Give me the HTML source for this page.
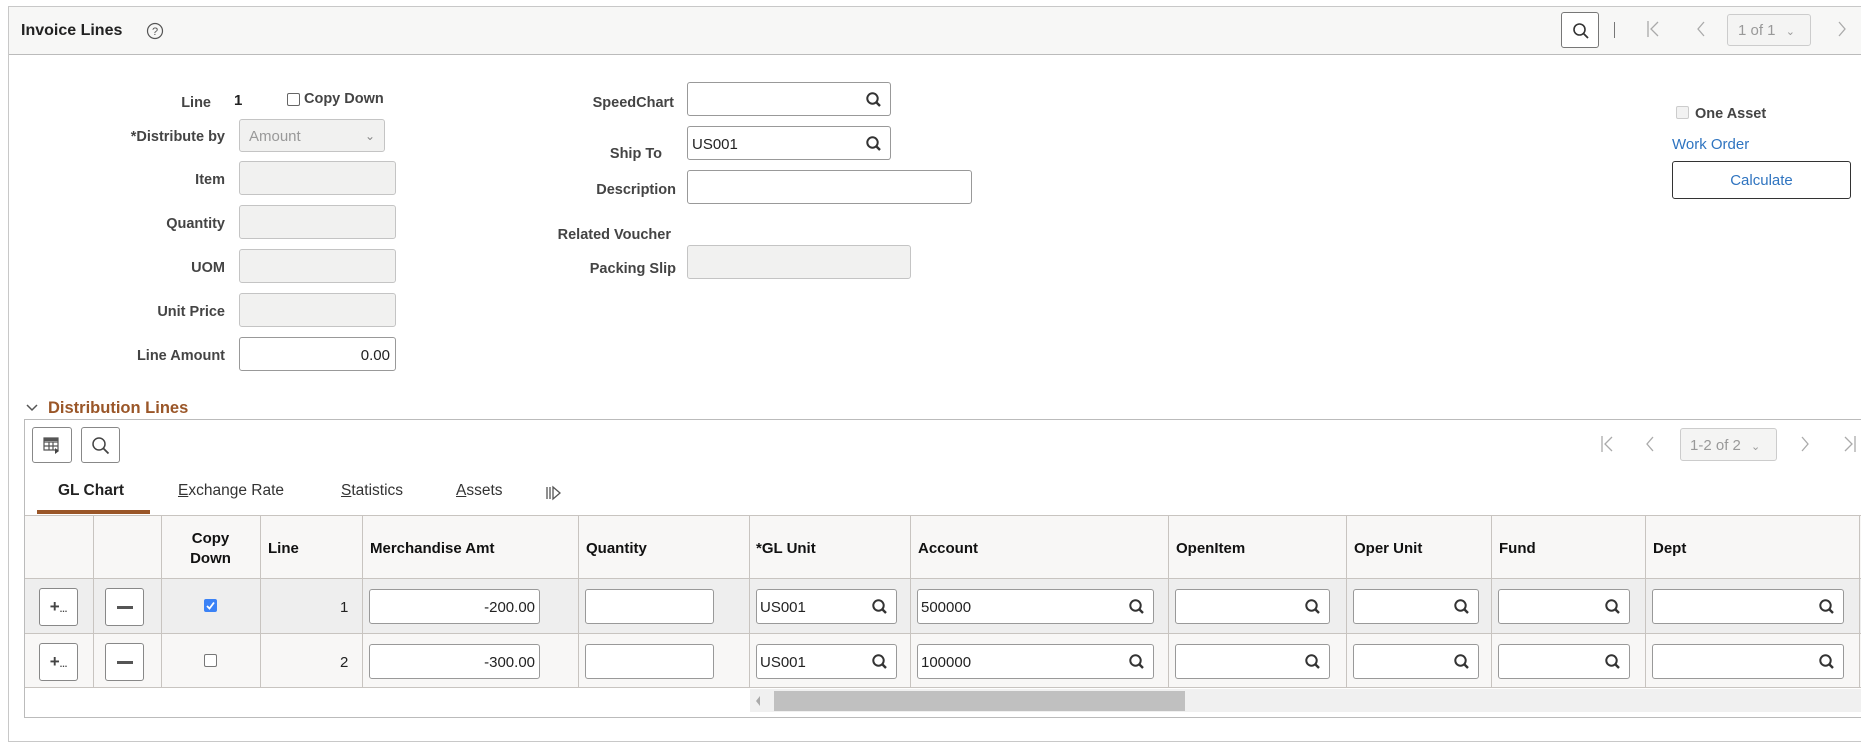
<!DOCTYPE html>
<html><head><meta charset="utf-8"><style>
*{box-sizing:border-box;margin:0;padding:0}
body{width:1861px;height:743px;background:#fff;font-family:"Liberation Sans",Arial,sans-serif;color:#333;position:relative;overflow:hidden}
.a{position:absolute}
.panel{left:8px;top:6px;width:1870px;height:736px;border:1px solid #c8c8c8}
.hdr{left:9px;top:7px;width:1852px;height:48px;background:#f7f7f6;border-bottom:1px solid #bbb}
.lbl{font-size:14.5px;font-weight:bold;color:#444;text-align:right;white-space:nowrap}
.inp{border:1px solid #999;border-radius:3px;background:#fff;height:34px}
.dis{background:#f1f1f0;border-color:#c4c4c4}
.txt{font-size:15px;color:#222}
.inp.txt{line-height:34px!important;padding-top:1px}
.btn{border:1px solid #888;border-radius:3px;background:#fff}
.th{font-size:15px;font-weight:bold;color:#111}
.vl{position:absolute;top:515px;height:173px;border-left:1px solid #c8c4c0}
.q{position:absolute;right:7px;top:8px}
</style></head><body>
<div class="a panel"></div>
<div class="a hdr"></div>
<div class="a" style="left:21px;top:22px;font-size:16px;font-weight:bold;color:#222">Invoice Lines</div>
<svg class="a" style="left:146px;top:22px" width="18" height="18"><circle cx="9" cy="9" r="7.5" fill="none" stroke="#555" stroke-width="1.2"/><text x="9" y="13" font-size="11" text-anchor="middle" fill="#555" font-family="Liberation Sans">?</text></svg>
<div class="a btn" style="left:1561px;top:12px;width:38px;height:36px;border-color:#777"><svg style="position:absolute;left:10px;top:9px" width="18" height="18"><circle cx="7.5" cy="7.5" r="5.5" fill="none" stroke="#333" stroke-width="1.6"/><path d="M11.5 11.5 L16 16" stroke="#333" stroke-width="1.8"/></svg></div>
<div class="a" style="left:1614px;top:22px;width:1px;height:16px;background:#777"></div>
<svg class="a" style="left:1646px;top:20px" width="14" height="18"><path d="M2 1V17M12 2L5 9L12 16" fill="none" stroke="#aaa" stroke-width="1.3"/></svg>
<svg class="a" style="left:1696px;top:20px" width="10" height="18"><path d="M8 2L2 9L8 16" fill="none" stroke="#aaa" stroke-width="1.3"/></svg>
<div class="a" style="left:1727px;top:14px;width:84px;height:32px;border:1px solid #ccc;border-radius:3px;background:#f4f4f3;color:#999;font-size:15px;line-height:32px;padding-left:10px">1 of 1 <span style="font-size:11px;margin-left:6px">&#8964;</span></div>
<svg class="a" style="left:1837px;top:20px" width="10" height="18"><path d="M2 2L8 9L2 16" fill="none" stroke="#aaa" stroke-width="1.3"/></svg>

<!-- left form -->
<div class="a lbl" style="right:1650px;top:95px">Line</div>
<div class="a" style="left:234px;top:92px;font-size:15px;font-weight:bold;color:#222">1</div>
<div class="a" style="left:287px;top:93px;width:13px;height:13px;border:1px solid #666;border-radius:2px"></div>
<div class="a lbl" style="left:304px;top:91px">Copy Down</div>
<div class="a lbl" style="right:1636px;top:129px">*Distribute by</div>
<div class="a inp dis" style="left:239px;top:119px;width:146px;height:33px;color:#999;font-size:15px;line-height:33px;padding-left:9px">Amount<span style="position:absolute;right:9px;font-size:12px;color:#888">&#8964;</span></div>
<div class="a lbl" style="right:1636px;top:172px">Item</div><div class="a inp dis" style="left:239px;top:161px;width:157px"></div>
<div class="a lbl" style="right:1636px;top:216px">Quantity</div><div class="a inp dis" style="left:239px;top:205px;width:157px"></div>
<div class="a lbl" style="right:1636px;top:260px">UOM</div><div class="a inp dis" style="left:239px;top:249px;width:157px"></div>
<div class="a lbl" style="right:1636px;top:304px">Unit Price</div><div class="a inp dis" style="left:239px;top:293px;width:157px"></div>
<div class="a lbl" style="right:1636px;top:348px">Line Amount</div><div class="a inp txt" style="left:239px;top:337px;width:157px;text-align:right;padding-right:5px">0.00</div>

<!-- middle -->
<div class="a lbl" style="right:1187px;top:95px">SpeedChart</div>
<div class="a inp" style="left:687px;top:82px;width:204px"><svg class="q" width="18" height="18"><circle cx="7.5" cy="7.5" r="5.2" fill="none" stroke="#333" stroke-width="2"/><path d="M11 11L15 15" stroke="#333" stroke-width="2.4"/></svg></div>
<div class="a lbl" style="right:1199px;top:146px">Ship To</div>
<div class="a inp txt" style="left:687px;top:126px;width:204px;padding-left:4px">US001<svg class="q" width="18" height="18"><circle cx="7.5" cy="7.5" r="5.2" fill="none" stroke="#333" stroke-width="2"/><path d="M11 11L15 15" stroke="#333" stroke-width="2.4"/></svg></div>
<div class="a lbl" style="right:1185px;top:182px">Description</div>
<div class="a inp" style="left:687px;top:170px;width:285px"></div>
<div class="a lbl" style="right:1190px;top:227px">Related Voucher</div>
<div class="a lbl" style="right:1185px;top:261px">Packing Slip</div>
<div class="a inp dis" style="left:687px;top:245px;width:224px"></div>

<!-- right -->
<div class="a" style="left:1676px;top:106px;width:13px;height:13px;border:1px solid #ccc;border-radius:2px;background:#f2f2f2"></div>
<div class="a lbl" style="left:1695px;top:106px">One Asset</div>
<div class="a" style="left:1672px;top:136px;color:#2f74c0;font-size:15px">Work Order</div>
<div class="a" style="left:1672px;top:161px;width:179px;height:38px;border:1px solid #333;border-radius:3px;color:#2f74c0;font-size:15px;text-align:center;line-height:38px">Calculate</div>

<!-- distribution lines -->
<svg class="a" style="left:25px;top:402px" width="14" height="12"><path d="M2 3L7 8L12 3" fill="none" stroke="#555" stroke-width="1.5"/></svg>
<div class="a" style="left:48px;top:399px;font-size:16.5px;font-weight:bold;color:#9a5628">Distribution Lines</div>
<div class="a" style="left:24px;top:419px;width:1850px;height:299px;border:1px solid #bbb"></div>
<div class="a btn" style="left:32px;top:427px;width:40px;height:36px"><svg style="position:absolute;left:10px;top:9px" width="20" height="18"><path d="M1 1H15V13H1ZM1 5H15M1 9H15M6 5V13M10 5V13" fill="none" stroke="#555" stroke-width="1.2"/><path d="M12 11L16 14L12 17Z" fill="#444"/><rect x="1" y="1" width="14" height="3" fill="#555"/></svg></div>
<div class="a btn" style="left:81px;top:427px;width:39px;height:36px"><svg style="position:absolute;left:9px;top:8px" width="20" height="20"><circle cx="8" cy="8" r="6" fill="none" stroke="#444" stroke-width="1.5"/><path d="M12.5 12.5L17.5 17.5" stroke="#444" stroke-width="1.8"/></svg></div>
<svg class="a" style="left:1600px;top:435px" width="14" height="18"><path d="M2 1V17M12 2L5 9L12 16" fill="none" stroke="#aaa" stroke-width="1.3"/></svg>
<svg class="a" style="left:1645px;top:435px" width="10" height="18"><path d="M8 2L2 9L8 16" fill="none" stroke="#aaa" stroke-width="1.3"/></svg>
<div class="a" style="left:1680px;top:428px;width:97px;height:33px;border:1px solid #ccc;border-radius:3px;background:#f4f4f3;color:#999;font-size:15px;line-height:33px;padding-left:9px">1-2 of 2 <span style="font-size:11px;margin-left:6px">&#8964;</span></div>
<svg class="a" style="left:1800px;top:435px" width="10" height="18"><path d="M2 2L8 9L2 16" fill="none" stroke="#aaa" stroke-width="1.3"/></svg>
<svg class="a" style="left:1843px;top:435px" width="14" height="18"><path d="M2 2L9 9L2 16M12 1V17" fill="none" stroke="#aaa" stroke-width="1.3"/></svg>

<div class="a" style="left:58px;top:482px;font-size:15.5px;font-weight:bold;color:#222">GL Chart</div>
<div class="a" style="left:178px;top:482px;font-size:15.5px;color:#333"><u>E</u>xchange Rate</div>
<div class="a" style="left:341px;top:482px;font-size:15.5px;color:#333"><u>S</u>tatistics</div>
<div class="a" style="left:456px;top:482px;font-size:15.5px;color:#333"><u>A</u>ssets</div>
<svg class="a" style="left:546px;top:485px" width="16" height="16"><path d="M1 2V14M4 2V14" stroke="#555" stroke-width="1.3"/><path d="M7 2L14 8L7 14Z" fill="none" stroke="#555" stroke-width="1.3"/></svg>
<div class="a" style="left:37px;top:510px;width:113px;height:4px;background:#9a5628"></div>

<!-- table -->
<div class="a" style="left:25px;top:515px;width:1836px;height:64px;background:#f8f7f6;border-top:1px solid #c8c4c0;border-bottom:1px solid #c8c4c0"></div>
<div class="a" style="left:25px;top:579px;width:1836px;height:55px;background:#eeeeee;border-bottom:1px solid #c8c4c0"></div>
<div class="a" style="left:25px;top:634px;width:1836px;height:54px;background:#f8f7f6;border-bottom:1px solid #c8c4c0"></div>
<div class="vl" style="left:93px"></div><div class="vl" style="left:161px"></div><div class="vl" style="left:260px"></div><div class="vl" style="left:362px"></div><div class="vl" style="left:578px"></div><div class="vl" style="left:749px"></div><div class="vl" style="left:910px"></div><div class="vl" style="left:1168px"></div><div class="vl" style="left:1346px"></div><div class="vl" style="left:1491px"></div><div class="vl" style="left:1645px"></div><div class="vl" style="left:1859px"></div>

<div class="a th" style="left:161px;width:99px;top:529px;text-align:center;line-height:20px">Copy<br>Down</div>
<div class="a th" style="left:268px;top:540px">Line</div>
<div class="a th" style="left:370px;top:540px">Merchandise Amt</div>
<div class="a th" style="left:586px;top:540px">Quantity</div>
<div class="a th" style="left:756px;top:540px">*GL Unit</div>
<div class="a th" style="left:918px;top:540px">Account</div>
<div class="a th" style="left:1176px;top:540px">OpenItem</div>
<div class="a th" style="left:1354px;top:540px">Oper Unit</div>
<div class="a th" style="left:1499px;top:540px">Fund</div>
<div class="a th" style="left:1653px;top:540px">Dept</div>

<!-- row 1 -->
<div class="a btn" style="left:39px;top:588px;width:39px;height:38px;font-size:17px;font-weight:bold;color:#444;text-align:center;line-height:36px">+<span style="font-size:9px">...</span></div>
<div class="a btn" style="left:105px;top:588px;width:39px;height:38px"><div style="position:absolute;left:11px;top:17px;width:16px;height:3px;background:#555"></div></div>
<div class="a" style="left:204px;top:599px;width:13px;height:13px;background:#3b82f6;border-radius:2px"><svg width="13" height="13"><path d="M3 7L5.5 9.5L10 3.5" fill="none" stroke="#fff" stroke-width="1.8"/></svg></div>
<div class="a txt" style="left:340px;top:599px">1</div>
<div class="a inp txt" style="left:369px;top:589px;width:171px;height:35px;text-align:right;padding-right:4px">-200.00</div>
<div class="a inp" style="left:585px;top:589px;width:129px;height:35px"></div>
<div class="a inp txt" style="left:756px;top:589px;width:141px;height:35px;padding-left:3px">US001<svg class="q" width="18" height="18"><circle cx="7.5" cy="7.5" r="5.2" fill="none" stroke="#333" stroke-width="2"/><path d="M11 11L15 15" stroke="#333" stroke-width="2.4"/></svg></div>
<div class="a inp txt" style="left:917px;top:589px;width:237px;height:35px;padding-left:3px">500000<svg class="q" width="18" height="18"><circle cx="7.5" cy="7.5" r="5.2" fill="none" stroke="#333" stroke-width="2"/><path d="M11 11L15 15" stroke="#333" stroke-width="2.4"/></svg></div>
<div class="a inp" style="left:1175px;top:589px;width:155px;height:35px"><svg class="q" width="18" height="18"><circle cx="7.5" cy="7.5" r="5.2" fill="none" stroke="#333" stroke-width="2"/><path d="M11 11L15 15" stroke="#333" stroke-width="2.4"/></svg></div>
<div class="a inp" style="left:1353px;top:589px;width:126px;height:35px"><svg class="q" width="18" height="18"><circle cx="7.5" cy="7.5" r="5.2" fill="none" stroke="#333" stroke-width="2"/><path d="M11 11L15 15" stroke="#333" stroke-width="2.4"/></svg></div>
<div class="a inp" style="left:1498px;top:589px;width:132px;height:35px"><svg class="q" width="18" height="18"><circle cx="7.5" cy="7.5" r="5.2" fill="none" stroke="#333" stroke-width="2"/><path d="M11 11L15 15" stroke="#333" stroke-width="2.4"/></svg></div>
<div class="a inp" style="left:1652px;top:589px;width:192px;height:35px"><svg class="q" width="18" height="18"><circle cx="7.5" cy="7.5" r="5.2" fill="none" stroke="#333" stroke-width="2"/><path d="M11 11L15 15" stroke="#333" stroke-width="2.4"/></svg></div>
<!-- row 2 -->
<div class="a btn" style="left:39px;top:643px;width:39px;height:38px;font-size:17px;font-weight:bold;color:#444;text-align:center;line-height:36px">+<span style="font-size:9px">...</span></div>
<div class="a btn" style="left:105px;top:643px;width:39px;height:38px"><div style="position:absolute;left:11px;top:17px;width:16px;height:3px;background:#555"></div></div>
<div class="a" style="left:204px;top:654px;width:13px;height:13px;border:1px solid #777;border-radius:2px;background:#fff"></div>
<div class="a txt" style="left:340px;top:654px">2</div>
<div class="a inp txt" style="left:369px;top:644px;width:171px;height:35px;text-align:right;padding-right:4px">-300.00</div>
<div class="a inp" style="left:585px;top:644px;width:129px;height:35px"></div>
<div class="a inp txt" style="left:756px;top:644px;width:141px;height:35px;padding-left:3px">US001<svg class="q" width="18" height="18"><circle cx="7.5" cy="7.5" r="5.2" fill="none" stroke="#333" stroke-width="2"/><path d="M11 11L15 15" stroke="#333" stroke-width="2.4"/></svg></div>
<div class="a inp txt" style="left:917px;top:644px;width:237px;height:35px;padding-left:3px">100000<svg class="q" width="18" height="18"><circle cx="7.5" cy="7.5" r="5.2" fill="none" stroke="#333" stroke-width="2"/><path d="M11 11L15 15" stroke="#333" stroke-width="2.4"/></svg></div>
<div class="a inp" style="left:1175px;top:644px;width:155px;height:35px"><svg class="q" width="18" height="18"><circle cx="7.5" cy="7.5" r="5.2" fill="none" stroke="#333" stroke-width="2"/><path d="M11 11L15 15" stroke="#333" stroke-width="2.4"/></svg></div>
<div class="a inp" style="left:1353px;top:644px;width:126px;height:35px"><svg class="q" width="18" height="18"><circle cx="7.5" cy="7.5" r="5.2" fill="none" stroke="#333" stroke-width="2"/><path d="M11 11L15 15" stroke="#333" stroke-width="2.4"/></svg></div>
<div class="a inp" style="left:1498px;top:644px;width:132px;height:35px"><svg class="q" width="18" height="18"><circle cx="7.5" cy="7.5" r="5.2" fill="none" stroke="#333" stroke-width="2"/><path d="M11 11L15 15" stroke="#333" stroke-width="2.4"/></svg></div>
<div class="a inp" style="left:1652px;top:644px;width:192px;height:35px"><svg class="q" width="18" height="18"><circle cx="7.5" cy="7.5" r="5.2" fill="none" stroke="#333" stroke-width="2"/><path d="M11 11L15 15" stroke="#333" stroke-width="2.4"/></svg></div>

<!-- scrollbar -->
<div class="a" style="left:750px;top:689px;width:1111px;height:23px;background:#f0f0f0"></div>
<svg class="a" style="left:754px;top:694px" width="8" height="14"><path d="M6 2L2 7L6 12Z" fill="#aaa"/></svg>
<div class="a" style="left:774px;top:691px;width:411px;height:20px;background:#c0c0c0"></div>
</body></html>
